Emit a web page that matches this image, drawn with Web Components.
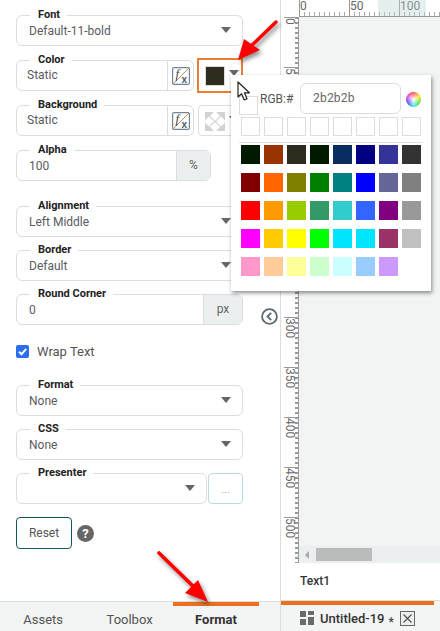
<!DOCTYPE html>
<html><head><meta charset="utf-8">
<style>
html,body{margin:0;padding:0;height:631px;overflow:hidden;background:#fff;font-family:Roboto,"Liberation Sans",sans-serif}
</style></head><body>
<app-shell>
  <side-panel slot="side">
    <form-row style="margin-top:15px"><x-field label="Font" value="Default-11-bold" caret></x-field></form-row>
    <form-row style="margin-top:14px">
      <x-field label="Color" value="Static" fx style="width:178px" inset></x-field>
      <swatch-button active color="#2e2c1e" style="margin:-2px 0 -2px"></swatch-button>
    </form-row>
    <form-row style="margin-top:14px">
      <x-field label="Background" value="Static" fx style="width:178px" inset></x-field>
      <swatch-button checker></swatch-button>
    </form-row>
    <form-row style="margin-top:14px"><x-field label="Alpha" value="100" addon="%" addonw="34" style="width:195px"></x-field></form-row>
    <form-row style="margin-top:25px"><x-field label="Alignment" value="Left Middle" caret></x-field></form-row>
    <form-row style="margin-top:13px"><x-field label="Border" value="Default" caret></x-field></form-row>
    <form-row style="margin-top:13px"><x-field label="Round Corner" value="0" addon="px" addonw="39"></x-field></form-row>
    <check-row style="margin-top:20px">Wrap Text</check-row>
    <form-row style="margin-top:27px"><x-field label="Format" value="None" caret></x-field></form-row>
    <form-row style="margin-top:13px"><x-field label="CSS" value="None" caret></x-field></form-row>
    <form-row style="margin-top:13px;gap:1px">
      <x-field label="Presenter" value="" caret style="width:191px"></x-field>
      <dots-button></dots-button>
    </form-row>
    <reset-row style="margin-top:13px"></reset-row>
  </side-panel>
  <work-area slot="work"></work-area>
</app-shell>
<script>
function def(name, css, html, init){
  customElements.define(name, class extends HTMLElement{
    connectedCallback(){
      if(this.shadowRoot) return;
      const r=this.attachShadow({mode:'open'});
      const h=typeof html==='function'?html(this):html;
      r.innerHTML='<style>'+css+'</style>'+h;
      if(init) init(r,this);
    }
  });
}
const caretSvg=(w,h)=>`<svg width="${w}" height="${h}" viewBox="0 0 10 6" style="display:block"><path d="M0 0H10L5 6Z" fill="#666"/></svg>`;

def('app-shell',`
:host{display:flex;position:relative;width:440px;height:631px;overflow:hidden}
.side{width:281px;flex:none;display:flex}
.work{flex:1;min-width:0;display:flex}
.collapse{position:absolute;left:261px;top:308px}
.cursor{position:absolute;left:237px;top:81px;z-index:6}
.arrow{position:absolute;left:0;top:0;z-index:5;filter:drop-shadow(2px 3px 2px rgba(0,0,0,.45));pointer-events:none}
color-popup{position:absolute;left:231px;top:75px;z-index:4}
`,`
<div class="side"><slot name="side"></slot></div>
<div class="work"><slot name="work"></slot></div>
<svg class="collapse" width="17" height="17" viewBox="0 0 17 17"><circle cx="8.5" cy="8.5" r="7.4" fill="#fff" stroke="#5a6870" stroke-width="1.8"/><path d="M10.2 4.8 6.4 8.5l3.8 3.7" fill="none" stroke="#5a6870" stroke-width="1.8"/></svg>
<color-popup></color-popup>
<svg class="arrow" width="440" height="631">
  <path d="M276 22 247 50" stroke="#f00" stroke-width="3.4" stroke-linecap="round"/>
  <path d="M238 60 244 39 260 50Z" fill="#f00"/>
  <path d="M159 553 199 592" stroke="#f00" stroke-width="3.6" stroke-linecap="round"/>
  <path d="M208 602 185 593 198 580Z" fill="#f00"/>
</svg>
<svg class="cursor" width="14" height="21" viewBox="0 0 14 21"><path d="M1 1V16L4.6 12.8 7.2 19 10 17.8 7.4 11.8H12.4Z" fill="#fff" stroke="#1c2418" stroke-width="1.2" stroke-linejoin="round"/></svg>
`);

def('side-panel',`
:host{display:flex;flex-direction:column;width:281px;height:631px;box-sizing:border-box;border-right:1px solid #ddd}
.content{flex:1;padding:0 37px 0 16px;min-height:0}
`,`<div class="content"><slot></slot></div><tab-bar></tab-bar>`);

def('form-row',`:host{display:flex;gap:3px}::slotted(x-field){flex:none}`,`<slot></slot>`);

def('x-field',`
:host{display:block;width:227px;flex:none;position:relative;font-size:12px;color:#5a5a62}
.box{display:flex;height:31px;box-sizing:border-box;border:1px solid #ddd;border-radius:6px;position:relative;overflow:hidden}
.val{flex:1;padding:0 0 0 12px;line-height:31px;height:29px;white-space:nowrap}
:host([inset]) .val{padding-left:10px;line-height:29px}
.label{position:absolute;left:14px;top:-7px;padding:0 7px 0 8px;background:#fff;font-size:11px;font-weight:700;line-height:13px;color:#222;z-index:1}
.caret{position:absolute;right:11px;top:11px}
.addon{flex:none;background:#eceff0;border-left:1px solid #ddd;box-sizing:border-box;text-align:center;line-height:29px;color:#666}
.fx{flex:none;width:26px;border-left:1px solid #ddd;box-sizing:border-box;display:flex;align-items:center;justify-content:center}
`,h=>{
  const a=n=>h.getAttribute(n);
  return `<div class="label">${a('label')}</div><div class="box"><div class="val">${a('value')||''}</div>
  ${h.hasAttribute('caret')?`<div class="caret">${caretSvg(10,6)}</div>`:''}
  ${a('addon')?`<div class="addon" style="width:${a('addonw')}px">${a('addon')}</div>`:''}
  ${h.hasAttribute('fx')?`<div class="fx"><svg width="18" height="18" viewBox="0 0 18 18"><rect x=".6" y=".6" width="16.8" height="16.8" rx="1.5" fill="#fff" stroke="#6f8599" stroke-width="1.2"/><path d="M1 17 17 1" stroke="#d08a58" stroke-width="1"/><text x="3.5" y="11" font-family="Liberation Serif,serif" font-style="italic" font-size="13" fill="#444">f</text><text x="9.5" y="16" font-family="Liberation Sans,sans-serif" font-weight="700" font-size="10" fill="#4a5b6c">x</text></svg></div>`:''}
  </div>`;
});

def('swatch-button',`
:host{display:block;width:46px;height:35px;box-sizing:border-box;border:1px solid #ddd;position:relative;flex:none}
:host([active]){border:2px solid #ed7d31}
:host([checker]){height:31px;width:45px;margin-left:1px;border-radius:4px 0 0 4px}
.s{position:absolute;left:6px;top:6px;width:20px;height:20px;box-sizing:border-box;border:1px solid #ddd}
:host([checker]) .s{left:6px;top:6px;width:20px;height:19px;border:0}
.c{position:absolute;left:30px;top:10px}
`,h=>`<div class="s" style="background:${h.getAttribute('color')||'transparent'}">${h.hasAttribute('checker')?`<svg width="20" height="19" viewBox="0 0 20 19" style="display:block"><rect width="20" height="19" fill="#d2d2d2"/><path d="M10-1 15 4 10 9 5 4ZM4 4.5 9 9.5 4 14.500-1 9.500ZM16 4.500 21 9.500 16 14.500 11 9.500ZM10 10 15 15 10 20 5 15Z" fill="#fff"/></svg>`:''}</div><div class="c">${caretSvg(10,6)}</div>`);

def('dots-button',`
:host{display:block;width:35px;height:31px;box-sizing:border-box;border:1px solid #b9dcdc;border-radius:4px;color:#aaa;text-align:center;font-size:11px;line-height:32px;flex:none}
`,`...`);

def('check-row',`
:host{display:flex;align-items:center;gap:8px;height:13px;font-size:13px;color:#555}
.b{width:13px;height:13px;border-radius:2px;background:#2a6df0;flex:none;display:block}
`,`<svg class="b" viewBox="0 0 13 13"><path d="M3 6.6 5.5 9.2 10.2 3.8" fill="none" stroke="#fff" stroke-width="2"/></svg><slot></slot>`);

def('reset-row',`
:host{display:flex;align-items:center;gap:5px}
.r{width:56px;height:32px;box-sizing:border-box;border:1px solid #0e5a5a;border-radius:4px;font-size:12px;line-height:30px;text-align:center;color:#555}
.q{width:17px;height:17px;border-radius:50%;background:#666;color:#fff;font-size:13px;font-weight:700;line-height:17px;text-align:center;margin-top:1px}
`,`<div class="r">Reset</div><div class="q">?</div>`);

def('tab-bar',`
:host{display:grid;grid-template-columns:repeat(3,86.4px);height:30px;box-sizing:border-box;border-top:1px solid #ddd;background:#f3f4f4;flex:none;font-size:13px;color:#555}
.t{text-align:center;padding-top:4px;height:25px;line-height:27px}
.t.on{border-top:4px solid #ea7020;padding-top:0;font-weight:700;color:#333}
`,`<div class="t">Assets</div><div class="t">Toolbox</div><div class="t on">Format</div>`);

def('color-popup',`
:host{display:block;width:200px;height:216px;box-sizing:border-box;background:#fff;box-shadow:1px 2px 4px rgba(0,0,0,.45);padding:8px 10px 0 8px}
.head{display:flex;align-items:center;height:31px;font-size:12px;color:#555}
.mini{width:19px;height:19px;box-sizing:border-box;border:1px solid #ddd;margin-right:2px;margin-top:14px;flex:none}
.lbl{margin-right:4px;width:36px;flex:none;margin-top:1px;white-space:nowrap}
.input{width:101px;height:31px;box-sizing:border-box;border:1px solid #ddd;border-radius:6px;line-height:29px;padding-left:12px;font-size:12px;color:#666;flex:none;letter-spacing:.2px}
.wheel{width:15px;height:15px;border-radius:50%;margin-left:5px;margin-top:1px;flex:none;background:radial-gradient(circle,#fff 0,rgba(255,255,255,.1) 70%),conic-gradient(#f33,#fd0,#3d3,#3dd,#33f,#d3d,#f33)}
.grid{display:grid;grid-template-columns:repeat(8,19px);column-gap:4px;margin-left:2px}
.empty{margin-top:3px}
.empty i{display:block;height:19px;box-sizing:border-box;border:1px solid #ddd}
hr{border:0;height:1px;background:#ddd;margin:6px 0 2px;width:184px}
.colors{row-gap:9px}
.colors i{display:block;height:19px}
`,()=>{
  const cols=['#001a00','#993300','#2e2c1e','#001a00','#0a2d60','#000080','#333399','#333333',
  '#800000','#ff6600','#808000','#008000','#008080','#0000ff','#666699','#808080',
  '#ff0000','#ff9900','#99cc00','#339966','#33cccc','#3366ff','#800080','#999999',
  '#ff00ff','#ffcc00','#ffff00','#00ff00','#00e5ff','#00e5ff','#993366','#c0c0c0',
  '#ff99cc','#ffcc99','#ffff99','#ccffcc','#ccffff','#99ccff','#cc99ff'];
  return `<div class="head"><div class="mini"></div><div class="lbl">RGB:#</div><div class="input">2b2b2b</div><div class="wheel"></div></div>
  <div class="grid empty">${'<i></i>'.repeat(8)}</div><hr>
  <div class="grid colors">${cols.map(c=>`<i style="background:${c}"></i>`).join('')}</div>`;
});

def('work-area',`
:host{display:flex;flex-direction:column;width:159px;height:631px}
.main{flex:1;display:flex;flex-direction:column;min-height:0}
.mid{flex:1;display:flex;min-height:0}
.col{flex:1;display:flex;flex-direction:column;min-width:0}
.canvas{flex:1;background:#f2f4f4}
.scroll{height:17px;background:#eceff0;position:relative;flex:none}
.thumb{position:absolute;left:17px;top:2px;width:56px;height:13px;background:#bbb}
.arr{position:absolute;left:6px;top:5px;width:0;height:0;border:4px solid transparent;border-left:0;border-right:4px solid #aaa}
.text{height:38px;box-sizing:border-box;border-bottom:1px solid #ddd;padding:0 0 0 19px;font-size:12px;line-height:37px;color:#333;font-weight:500;flex:none}
.tabs{height:30px;background:#f3f4f4;flex:none}
.bar{width:153px;height:4px;background:#ea7020}
.tab{display:flex;align-items:center;padding:1px 0 0 19px;height:25px;box-sizing:border-box;font-size:13px;font-weight:500;color:#333}
.tab svg{flex:none}
.name{margin-left:6px}
.star{font-size:12px;margin:8px 0 0 4px;color:#444}
.x{margin-left:6px}
`,`
<div class="main">
  <x-ruler dir="h"></x-ruler>
  <div class="mid"><x-ruler dir="v"></x-ruler><div class="col"><div class="canvas"></div><div class="scroll"><div class="arr"></div><div class="thumb"></div></div></div></div>
  <div class="text">Text1</div>
</div>
<div class="tabs"><div class="bar"></div>
<div class="tab"><svg width="14" height="14" viewBox="0 0 14 14"><path d="M0 0H6V6H0ZM8 0H14V4H8ZM0 8H6V14H0ZM8 6H14V14H8Z" fill="#6a6a6a"/></svg><span class="name">Untitled-19</span><span class="star">*</span><svg class="x" width="15" height="15" viewBox="0 0 15 15"><rect x=".5" y=".5" width="14" height="14" fill="#eef0f0" stroke="#666"/><path d="M3.5 3.5 11.5 11.5M11.5 3.5 3.5 11.5" stroke="#555" stroke-width="1.3"/></svg></div></div>
`);

def('x-ruler',`
:host{display:block;position:relative;flex:none;overflow:hidden;background:#fff;color:#666;font-size:12px}
:host([dir=h]){height:17px}
:host([dir=v]){width:18px}
.line{position:absolute;background:#999}
.ticks{position:absolute}
.lb{position:absolute;line-height:12px;white-space:nowrap}
.hl{position:absolute;left:97px;top:0;width:48px;height:16px;background:rgba(190,212,212,.38)}
`,h=>{
  let s='';
  if(h.getAttribute('dir')==='h'){
    s+=`<div class="ticks" style="left:18px;right:0;top:12px;height:4px;background:repeating-linear-gradient(90deg,#aaa 0 1px,transparent 1px 5px)"></div><div class="line" style="left:18px;right:0;top:16px;height:1px"></div>`;
    for(let n=0;n<=100;n+=50){
      const x=18+n;
      s+=`<div class="line" style="left:${x}px;top:0;width:1px;height:16px"></div><div class="lb" style="left:${x+1}px;top:0">${n}</div>`;
    }
    s+=`<div class="hl"></div>`;
  } else {
    s+=`<div class="ticks" style="left:14px;width:3px;top:0;bottom:0;background:repeating-linear-gradient(180deg,#999 0 2px,transparent 2px 5px)"></div><div class="line" style="left:17px;width:1px;top:0;bottom:0"></div>`;
    for(let n=0;n<=500;n+=50){
      s+=`<div class="line" style="left:3px;width:14px;top:${n}px;height:1px"></div><div class="lb" style="left:3px;top:${n+1}px;writing-mode:vertical-rl;line-height:11px">${n}</div>`;
    }
  }
  return s;
});
</script>
</body></html>
